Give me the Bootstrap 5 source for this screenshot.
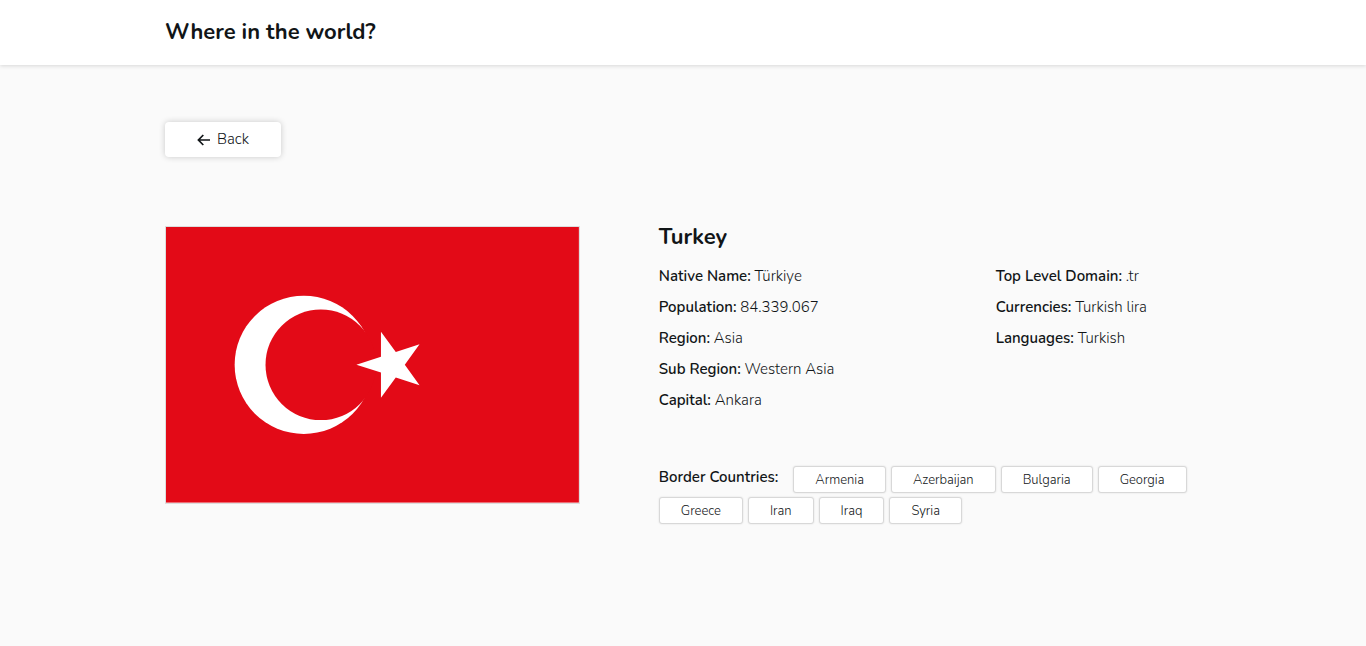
<!DOCTYPE html>
<html lang="en">
<head>
<meta charset="utf-8">
<meta name="viewport" content="width=device-width, initial-scale=1">
<title>Where in the world?</title>
<link href="https://cdn.jsdelivr.net/npm/bootstrap@5.3.0/dist/css/bootstrap.min.css" rel="stylesheet">
<style>
  body { font-family: Nunito, "Open Sans", "Noto Sans", sans-serif; font-size: 15px; line-height: 21px; font-weight: 300; color: #111517; background: #fff; }
  .gutter { padding-left: calc(12% + 1px); padding-right: 12%; }
  .site-header { position: relative; background: #fff; box-shadow: 0 1px 4px rgba(0,0,0,.14); padding-top: 18px; padding-bottom: 19px; }
  .title { font-size: 22px; line-height: 28px; font-weight: 700; color: #111517; }
  main { background: #fafafa; padding-top: 57px; padding-bottom: 122px; }
  .back-btn, .back-btn:hover { width: 116px; height: 35px; font-size: 15px; font-weight: 300; color: #111517; background: #fff; border: 0; border-radius: 4px; box-shadow: 0 0 6px rgba(0,0,0,.2); gap: 7px; }
  .details { margin-top: 66px; }
  .flag { border: 1px solid #ddd; margin-top: 3px; }
  .facts-title { margin-bottom: 15px; }
  .fact + .fact { margin-top: 10px; }
  strong { font-weight: 600; }
  .borders { margin-top: 55px; gap: 4px 5px; }
  .borders-label { margin-right: 10px; line-height: 23px; }
  .country, .country:hover { height: 27px; font-size: 13px; line-height: 26px; font-weight: 300; color: #111517; background: #fff; border: 1px solid #d8d8d8; border-radius: 3px; padding: 0 21px; box-shadow: 0 0 2px rgba(0,0,0,.12); }
  @media (min-width: 992px) {
    .details { display: grid; grid-template-columns: 40% minmax(0, 1fr); column-gap: 79px; align-items: start; }
    .facts { display: grid; grid-template-columns: 62% 38%; }
  }
</style>
</head>
<body>
<header class="site-header gutter">
  <h1 class="title mb-0">Where in the world?</h1>
</header>
<main class="gutter">
  <button type="button" class="btn back-btn d-flex align-items-center justify-content-center p-0">
    <svg width="13" height="12" viewBox="0 0 13 12" fill="none" stroke="#111517" stroke-width="1.7" aria-hidden="true"><path d="M6.3 1 1.4 6l4.900 5M1.600 6H13"/></svg>
    Back
  </button>
  <div class="details">
    <svg class="flag d-block w-100 h-auto" viewBox="0 0 412 275" role="img" aria-label="Flag of Turkey">
      <rect width="412" height="275" fill="#e30a17"/>
      <circle cx="137.5" cy="137.5" r="69" fill="#fff"/>
      <circle cx="154.5" cy="137.5" r="55.200" fill="#e30a17"/>
      <path fill="#fff" d="M190 137.500 214.500 129.600V104.500l14.800 20.300L253 117l-14.700 20.500L253 158l-23.700-7.900L214.500 170.500v-25.200z"/>
    </svg>
    <section>
      <h2 class="title facts-title">Turkey</h2>
      <div class="facts">
        <div>
          <div class="fact"><strong>Native Name:</strong> Türkiye</div>
          <div class="fact"><strong>Population:</strong> 84.339.067</div>
          <div class="fact"><strong>Region:</strong> Asia</div>
          <div class="fact"><strong>Sub Region:</strong> Western Asia</div>
          <div class="fact"><strong>Capital:</strong> Ankara</div>
        </div>
        <div>
          <div class="fact"><strong>Top Level Domain:</strong> .tr</div>
          <div class="fact"><strong>Currencies:</strong> Turkish lira</div>
          <div class="fact"><strong>Languages:</strong> Turkish</div>
        </div>
      </div>
      <div class="borders d-flex flex-wrap">
        <strong class="borders-label">Border Countries:</strong>
        <button type="button" class="btn country">Armenia</button>
        <button type="button" class="btn country">Azerbaijan</button>
        <button type="button" class="btn country">Bulgaria</button>
        <button type="button" class="btn country">Georgia</button>
        <button type="button" class="btn country">Greece</button>
        <button type="button" class="btn country">Iran</button>
        <button type="button" class="btn country">Iraq</button>
        <button type="button" class="btn country">Syria</button>
      </div>
    </section>
  </div>
</main>
<script src="https://cdn.jsdelivr.net/npm/bootstrap@5.3.0/dist/js/bootstrap.bundle.min.js"></script>
</body>
</html>
